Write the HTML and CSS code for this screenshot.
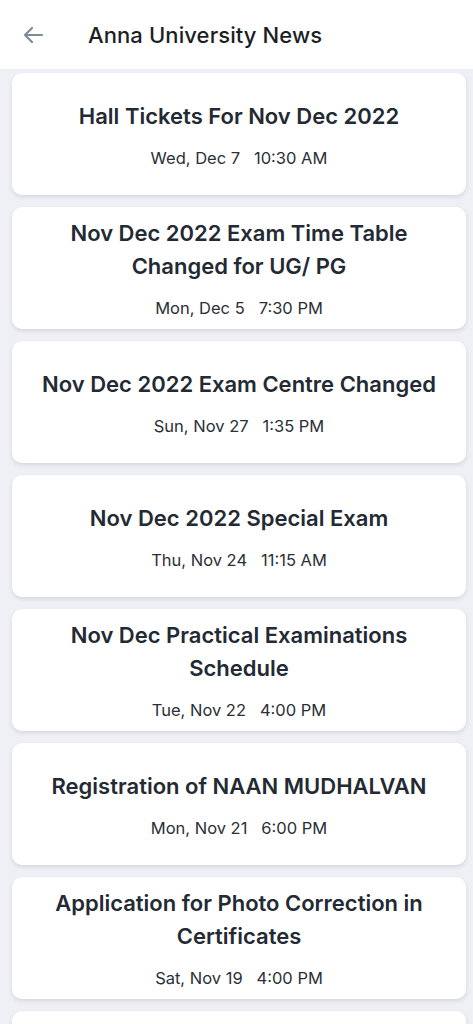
FILE: index.html
```html
<!DOCTYPE html>
<html lang="en">
<head>
    <meta charset="UTF-8">
    <meta name="viewport" content="width=device-width, initial-scale=1">
    <title>Anna University News</title>
    <link rel="stylesheet" href="styles.css">
</head>
<body>
    <div class="header">
        <button class="back-btn" aria-label="Back">
            <svg width="22" height="18" viewBox="0 0 22 18" fill="none" stroke="#7f8b99" stroke-width="2.2" stroke-linecap="round" stroke-linejoin="round">
                <path d="M20 9H3M10 2L3 9l7 7"/>
            </svg>
        </button>
        <h1>Anna University News</h1>
    </div>

    <div class="news-list">
        <div class="news-card">
            <div class="news-title">Hall Tickets For Nov Dec 2022</div>
            <div class="news-date">Wed, Dec 7&nbsp;&nbsp; 10:30 AM</div>
        </div>
        <div class="news-card">
            <div class="news-title">Nov Dec 2022 Exam Time Table Changed for UG/ PG</div>
            <div class="news-date">Mon, Dec 5&nbsp;&nbsp; 7:30 PM</div>
        </div>
        <div class="news-card">
            <div class="news-title">Nov Dec 2022 Exam Centre Changed</div>
            <div class="news-date">Sun, Nov 27&nbsp;&nbsp; 1:35 PM</div>
        </div>
        <div class="news-card">
            <div class="news-title">Nov Dec 2022 Special Exam</div>
            <div class="news-date">Thu, Nov 24&nbsp;&nbsp; 11:15 AM</div>
        </div>
        <div class="news-card">
            <div class="news-title">Nov Dec Practical Examinations Schedule</div>
            <div class="news-date">Tue, Nov 22&nbsp;&nbsp; 4:00 PM</div>
        </div>
        <div class="news-card">
            <div class="news-title">Registration of NAAN MUDHALVAN</div>
            <div class="news-date">Mon, Nov 21&nbsp;&nbsp; 6:00 PM</div>
        </div>
        <div class="news-card">
            <div class="news-title">Application for Photo Correction in Certificates</div>
            <div class="news-date">Sat, Nov 19&nbsp;&nbsp; 4:00 PM</div>
        </div>
        <!-- next item, only its top edge is on screen -->
        <div class="news-card"></div>
    </div>
</body>
</html>
```

FILE: styles.css
```css
html, body {
    margin: 0;
    font-family: 'Inter', 'Noto Sans', sans-serif;
    color: #222b36;
    background-color: #eef0f5;
}

body {
    height: 1024px;
    overflow: hidden;
}

.header {
    display: flex;
    align-items: center;
    height: 69px;
    background-color: #fff;
    padding-left: 22px;
}

.back-btn {
    display: flex;
    align-items: center;
    padding: 0;
    border: none;
    background: none;
    width: 24px;
    height: 24px;
    cursor: pointer;
}

.header h1 {
    margin: 0 0 0 42px;
    font-size: 22px;
    font-weight: 500;
    letter-spacing: 0.1px;
    color: #1c1f24;
}

.news-list {
    display: flex;
    flex-direction: column;
    gap: 12px;
    padding: 4px 7px 0 12px;
}

.news-card {
    display: flex;
    flex-direction: column;
    align-items: center;
    justify-content: center;
    gap: 14px;
    min-height: 122px;
    box-sizing: border-box;
    padding: 10px 20px;
    background-color: #fff;
    border-radius: 10px;
    box-shadow: 0 2px 4px rgba(30, 40, 60, 0.12);
    text-align: center;
}

.news-title {
    font-size: 22px;
    line-height: 33px;
    font-weight: 600;
    color: #232a33;
}

.news-date {
    font-size: 16.5px;
    line-height: 22px;
    color: #2b2f36;
}
```
